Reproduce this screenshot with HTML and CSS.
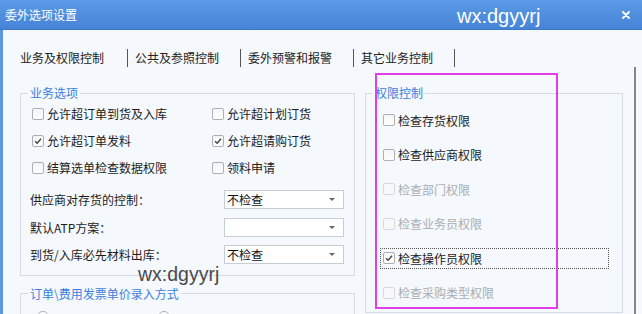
FILE: index.html
```html
<!DOCTYPE html>
<html lang="zh-CN">
<head>
<meta charset="utf-8">
<title>委外选项设置</title>
<link rel="stylesheet" href="styles.css">
</head>
<body>
<div class="window">
  <div class="titlebar">
    <span class="title">委外选项设置</span>
    <span class="title-mark">wx:dgyyrj</span>
    <svg class="close" width="8" height="8" viewBox="0 0 8 8"><path d="M1 1L7 7M7 1L1 7" stroke="#fff" stroke-width="1.8" stroke-linecap="round"/></svg>
  </div>
  <div class="body">
    <div class="tabs">
      <span class="tab first">业务及权限控制</span>
      <span class="tab">公共及参照控制</span>
      <span class="tab">委外预警和报警</span>
      <span class="tab">其它业务控制</span>
    </div>
    <div class="panel">
      <div class="leftcol">
        <fieldset class="group">
          <legend>业务选项</legend>
          <div class="checkgrid">
            <label class="check"><span class="box"></span>允许超订单到货及入库</label>
            <label class="check"><span class="box"></span>允许超计划订货</label>
            <label class="check"><span class="box checked"><svg width="10" height="10" viewBox="0 0 10 10"><path d="M2 5.2L4.2 7.2L8 2.8" fill="none" stroke="#444" stroke-width="1.4"/></svg></span>允许超订单发料</label>
            <label class="check"><span class="box checked"><svg width="10" height="10" viewBox="0 0 10 10"><path d="M2 5.2L4.2 7.2L8 2.8" fill="none" stroke="#444" stroke-width="1.4"/></svg></span>允许超请购订货</label>
            <label class="check"><span class="box"></span>结算选单检查数据权限</label>
            <label class="check"><span class="box"></span>领料申请</label>
          </div>
          <div class="selrows">
            <div class="selrow"><span class="sellabel">供应商对存货的控制：</span><span class="select">不检查<i class="arrow"></i></span></div>
            <div class="selrow"><span class="sellabel">默认ATP方案：</span><span class="select"><i class="arrow"></i></span></div>
            <div class="selrow"><span class="sellabel">到货/入库必先材料出库：</span><span class="select">不检查<i class="arrow"></i></span></div>
          </div>
        </fieldset>
        <fieldset class="group second">
          <legend>订单\费用发票单价录入方式</legend>
          <div class="radios">
            <span class="radio"></span>
            <span class="radio"></span>
          </div>
        </fieldset>
      </div>
      <fieldset class="group rightgroup">
        <legend>权限控制</legend>
        <div class="rows">
          <label class="rcheck"><span class="box"></span>检查存货权限</label>
          <label class="rcheck"><span class="box"></span>检查供应商权限</label>
          <label class="rcheck disabled"><span class="box"></span>检查部门权限</label>
          <label class="rcheck disabled"><span class="box"></span>检查业务员权限</label>
          <label class="rcheck focused"><span class="box checked"><svg width="10" height="10" viewBox="0 0 10 10"><path d="M2 5.2L4.2 7.2L8 2.8" fill="none" stroke="#444" stroke-width="1.4"/></svg></span>检查操作员权限</label>
          <label class="rcheck disabled"><span class="box"></span>检查采购类型权限</label>
        </div>
      </fieldset>
    </div>
  </div>
  <div class="mark">wx:dgyyrj</div>
  <div class="highlight"></div>
</div>
</body>
</html>
```
FILE: styles.css
```css
* { box-sizing: border-box; }
html, body { margin: 0; padding: 0; }
body {
  font-family: "Noto Sans CJK SC", "Noto Sans", sans-serif;
  font-size: 12px;
  color: #1c1c1c;
  background: #f5f8fc;
}
.window {
  position: relative;
  width: 642px;
  height: 314px;
  overflow: hidden;
  background: #f5f8fc;
}
.titlebar {
  height: 30px;
  background: linear-gradient(#5b9ae4, #4584d8);
  border-bottom: 1px solid #3d78c6;
  display: flex;
  align-items: center;
  color: #fff;
  padding-left: 5px;
}
.title { font-size: 12px; line-height: 14px; width: 452px; }
.title-mark {
  font-family: "Liberation Sans", Arial, sans-serif;
  font-size: 20px;
  line-height: 20px;
  margin-top: 2px;
}
.close { margin-left: auto; margin-right: 12px; }
.body {
  height: 284px;
  border-left: 3px solid #5a97df;
}
.tabs {
  display: flex;
  align-items: center;
  padding-left: 17px;
  padding-top: 19px;
  height: 37px;
}
.tab {
  line-height: 18px;
  padding: 0 21px 0 7px;
  border-right: 1px solid #555;
  color: #222;
}
.tab.first { padding-left: 0; padding-right: 23px; }
.panel {
  display: flex;
  gap: 10px;
  width: 633px;
  height: 247px;
  padding: 19px 0 0 17px;
  border-right: 2px solid #858585;
}
.leftcol { width: 335px; display: flex; flex-direction: column; }
.group {
  margin: 0;
  padding: 0;
  min-width: 0;
  border: 1px solid #d4dbe5;
}
.group legend {
  margin-left: 7px;
  padding: 0 2px;
  line-height: 14px;
  color: #3c7fdc;
}
.checkgrid {
  display: grid;
  grid-template-columns: 180px 1fr;
  grid-auto-rows: 27px;
  padding-left: 11px;
}
.check, .rcheck {
  display: flex;
  align-items: center;
  gap: 3px;
  white-space: nowrap;
}
.box {
  width: 12px;
  height: 12px;
  border: 1px solid #a9b0ba;
  border-radius: 2px;
  background: linear-gradient(#f4f5f7, #ffffff);
  display: flex;
  align-items: center;
  justify-content: center;
  flex: none;
}
.selrows { margin-top: 5px; padding-left: 9px; padding-bottom: 6px; }
.selrow { display: flex; align-items: center; height: 27.5px; }
.sellabel { width: 194px; white-space: nowrap; }
.select {
  position: relative;
  width: 120px;
  height: 19px;
  background: #fff;
  border: 1px solid #c6cdd7;
  line-height: 17px;
  padding-left: 2px;
  color: #111;
}
.arrow {
  position: absolute;
  right: 8px;
  top: 7px;
  width: 0;
  height: 0;
  border-left: 3px solid transparent;
  border-right: 3px solid transparent;
  border-top: 3px solid #666;
}
.second { margin-top: 11px; flex: 1; }
.radios { display: flex; gap: 109px; padding: 10px 0 0 16px; }
.radio {
  width: 12px; height: 12px;
  border: 1px solid #a9b0ba;
  border-radius: 50%;
  background: #fff;
}
.rightgroup { width: 258px; height: 227px; }
.rows {
  display: flex;
  flex-direction: column;
  gap: 13.6px;
  padding: 9.5px 0 8px 14px;
}
.rcheck {
  width: 229px;
  height: 21px;
  padding-left: 2px;
  border: 1px dotted transparent;
}
.rcheck.focused { border-color: #555; }
.rcheck.disabled { color: #a9aeb4; }
.rcheck.disabled .box { border-color: #d6dae0; background: #f7f8fa; }
.mark {
  position: absolute;
  left: 138px;
  top: 263px;
  font-family: "Liberation Sans", Arial, sans-serif;
  font-size: 19.5px;
  line-height: 22px;
  color: #4a4a4a;
}
.highlight {
  position: absolute;
  left: 375px;
  top: 73px;
  width: 183px;
  height: 236px;
  border: 2px solid #e23de6;
}
```
